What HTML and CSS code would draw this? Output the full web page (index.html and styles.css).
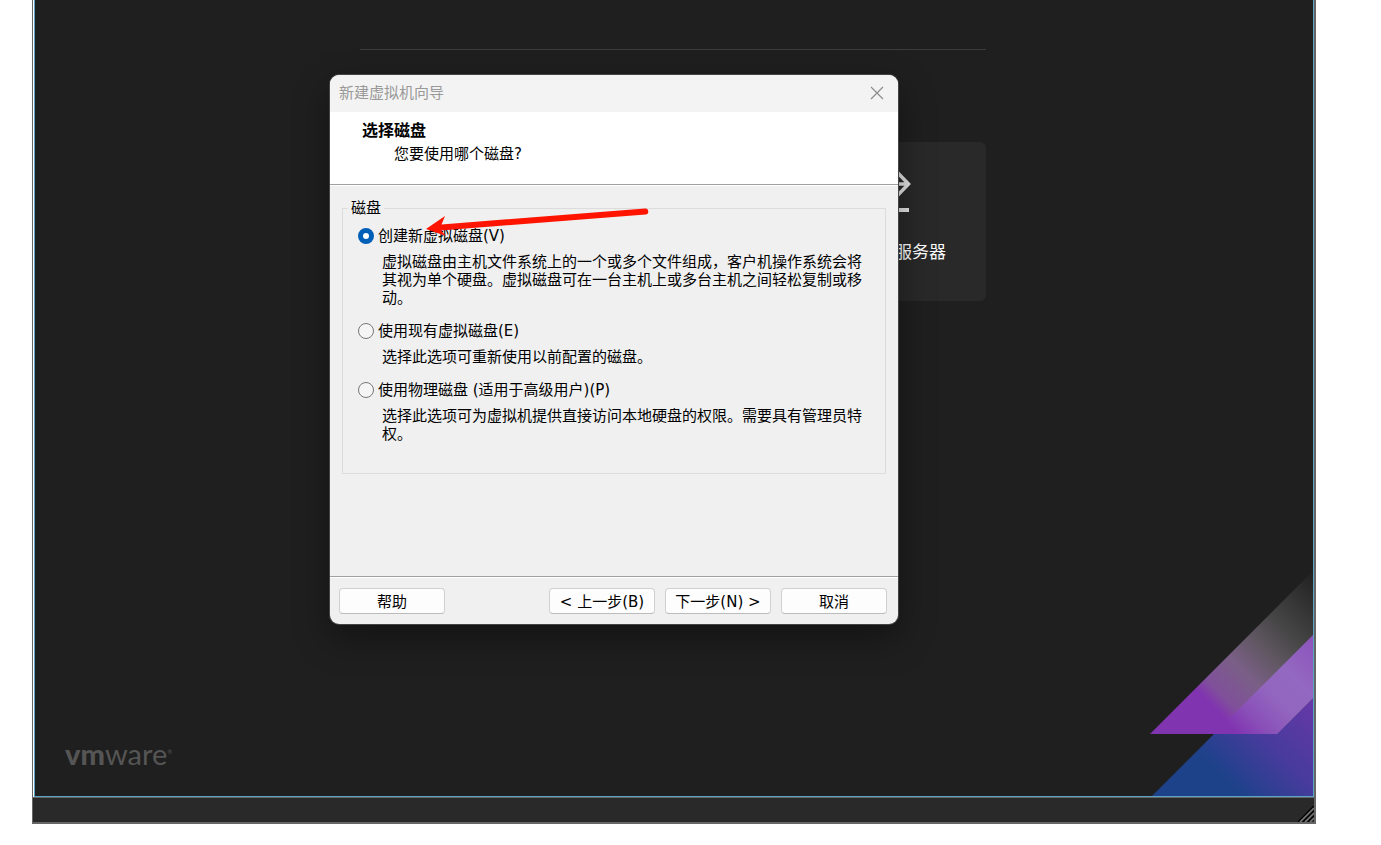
FILE: index.html
```html
<!DOCTYPE html>
<html lang="zh-CN">
<head>
<meta charset="utf-8">
<title>新建虚拟机向导</title>
<link rel="stylesheet" href="styles.css">
</head>
<body>
<div class="app">
  <main class="canvas">
    <section class="home">
      <hr class="rule">
      <div class="cards">
        <a class="card" href="#">
          <svg class="card-icon" width="48" height="48" viewBox="0 0 48 48" fill="none" stroke="#e4e4e4" stroke-width="4" aria-hidden="true">
            <path d="M6 20H45M32.500 6.500L45.500 20L32.500 33.500" stroke-width="3.500"/>
            <path d="M2 46H46"/>
          </svg>
          <span class="card-label">服务器</span>
        </a>
      </div>
    </section>
    <div class="brand"><b>vm</b>ware<sup>®</sup></div>
    <svg class="art" width="163" height="225" viewBox="0 0 163 225" aria-hidden="true">
      <defs>
        <linearGradient id="fade" gradientUnits="userSpaceOnUse" x1="0" y1="163" x2="163" y2="0">
          <stop offset="0" stop-color="#8134b0"/><stop offset=".28" stop-color="#8134b0"/>
          <stop offset=".34" stop-color="#80509b"/><stop offset=".48" stop-color="#7a5f86"/>
          <stop offset=".6" stop-color="#625865"/><stop offset=".73" stop-color="#474747"/>
          <stop offset="1" stop-color="#202020"/>
        </linearGradient>
        <linearGradient id="blue" gradientUnits="userSpaceOnUse" x1="0" y1="133" x2="85" y2="48">
          <stop offset="0" stop-color="#1d428a"/><stop offset=".45" stop-color="#473b9c"/><stop offset="1" stop-color="#6738a8"/>
        </linearGradient>
        <linearGradient id="mix" gradientUnits="userSpaceOnUse" x1="0" y1="163" x2="163" y2="0">
          <stop offset=".27" stop-color="#8134b0"/><stop offset=".37" stop-color="#8a50b9"/>
          <stop offset=".5" stop-color="#9266bf"/><stop offset=".62" stop-color="#9368c1"/><stop offset=".8" stop-color="#8c53bb"/>
        </linearGradient>
      </defs>
      <path d="M2 225L163 64V225Z" fill="url(#blue)"/>
      <path d="M0 163H127L163 127V0Z" fill="url(#fade)"/>
      <path d="M64 163H127L163 127V64Z" fill="url(#mix)"/>
    </svg>
  </main>
  <footer class="statusbar">
    <svg width="16" height="16" viewBox="0 0 16 16" fill="none" aria-hidden="true">
      <path d="M0 16L16 0M5 16L16 5M10 16L16 10" stroke="#000" stroke-width="1.500"/>
      <path d="M2 16L16 2M7 16L16 7M12 16L16 12" stroke="#777" stroke-width="1.500"/>
    </svg>
  </footer>
</div>

<form class="dialog" role="dialog" aria-labelledby="dialog-title">
  <div class="titlebar">
    <span id="dialog-title">新建虚拟机向导</span>
    <button class="close" type="button" aria-label="关闭">
      <svg width="14" height="14" viewBox="0 0 14 14" fill="none" stroke="#8c8c8c" stroke-width="1.200"><path d="M1 1L13 13M13 1L1 13"/></svg>
    </button>
  </div>
  <header class="heading">
    <h1>选择磁盘</h1>
    <p>您要使用哪个磁盘?</p>
  </header>
  <div class="body">
    <fieldset>
      <legend>磁盘</legend>
      <div class="option">
        <label><input type="radio" name="disk" checked>创建新虚拟磁盘(V)</label>
        <p>虚拟磁盘由主机文件系统上的一个或多个文件组成，客户机操作系统会将其视为单个硬盘。虚拟磁盘可在一台主机上或多台主机之间轻松复制或移动。</p>
      </div>
      <div class="option">
        <label><input type="radio" name="disk">使用现有虚拟磁盘(E)</label>
        <p>选择此选项可重新使用以前配置的磁盘。</p>
      </div>
      <div class="option">
        <label><input type="radio" name="disk">使用物理磁盘 (适用于高级用户)(P)</label>
        <p>选择此选项可为虚拟机提供直接访问本地硬盘的权限。需要具有管理员特权。</p>
      </div>
    </fieldset>
  </div>
  <div class="actions">
    <button class="btn help" type="button">帮助</button>
    <button class="btn" type="button">&lt; 上一步(B)</button>
    <button class="btn" type="button">下一步(N) &gt;</button>
    <button class="btn" type="button">取消</button>
  </div>
  <svg class="pointer" width="224" height="30" viewBox="0 0 224 30" aria-hidden="true">
    <path d="M1 21L20 8L16.500 16.500L220 0.500A3 3 0 0 1 220.500 6.500L16 22.500L21 28Z" fill="#ff1400"/>
  </svg>
</form>
</body>
</html>
```
FILE: styles.css
```css
* { box-sizing: border-box; }

body {
  margin: 0;
  background: #fff;
  color: #000;
  font: 15px/18px "DejaVu Sans", "Noto Sans CJK SC", sans-serif;
}

h1, p { margin: 0; }

button { font: inherit; color: inherit; }

/* Application window */
.app {
  display: flex;
  flex-direction: column;
  height: calc(100vh - 21px);
  margin: 0 65px 0 32px;
  border: solid #666;
  border-width: 0 2px 2px 1px;
}

.canvas {
  position: relative;
  flex: 1;
  display: flex;
  flex-direction: column;
  justify-content: space-between;
  margin-left: 1px;
  border: solid #5aa3c4;
  border-width: 0 1px 1px;
  background: #1f1f1f;
  overflow: hidden;
}

.home {
  width: 100%;
  max-width: 628px;
  margin: 0 auto;
  padding: 49px 2px 0 0;
}

.rule {
  height: 1px;
  margin: 0 0 92px;
  border: 0;
  background: #3b3b3b;
}

.cards {
  display: flex;
  justify-content: flex-end;
}

.card {
  display: flex;
  flex-direction: column;
  align-items: center;
  gap: 27px;
  width: 198px;
  height: 159px;
  padding-top: 22px;
  border-radius: 6px;
  background: #292929;
  color: #fff;
  font: 17px/24px "Noto Sans CJK SC", sans-serif;
  text-decoration: none;
}

.card-icon { flex: none; }

.card-label {
  align-self: flex-end;
  padding-right: 40px;
}

.brand {
  padding: 0 0 24px 30px;
  color: #555;
  font: 400 29px/36px Lato, sans-serif;
}

.brand b { font-weight: 900; }

.brand sup {
  font-size: 6px;
  line-height: 8px;
  vertical-align: 11px;
}

.art {
  position: absolute;
  right: 0;
  bottom: 0;
}

.statusbar {
  display: flex;
  justify-content: flex-end;
  align-items: flex-end;
  height: 25px;
  border-top: 1px solid #666;
  background: #292929;
}

/* Wizard dialog */
.dialog {
  position: absolute;
  top: 75px;
  left: 330px;
  display: flex;
  flex-direction: column;
  width: 568px;
  min-height: 549px;
  border-radius: 9px;
  background: #f0f0f0;
  box-shadow: 0 0 0 1px #444, 0 14px 36px rgba(0, 0, 0, .4);
}

.titlebar {
  display: flex;
  justify-content: space-between;
  align-items: center;
  height: 37px;
  padding: 0 12px 2px 9px;
  border-radius: 9px 9px 0 0;
  background: #f3f3f3;
  color: #999;
}

.close {
  display: grid;
  place-items: center;
  width: 18px;
  height: 18px;
  padding: 0;
  border: 0;
  background: none;
}

.heading {
  height: 73px;
  padding: 9px 32px;
  border-bottom: 1px solid #a0a0a0;
  background: #fff;
}

.heading h1 {
  font-size: 16px;
  line-height: 20px;
}

.heading p { padding: 4px 0 0 32px; }

.body {
  flex: 1;
  padding: 13px 12px 0;
  border-top: 1px solid #fff;
}

fieldset {
  display: flex;
  flex-direction: column;
  gap: 15px;
  min-width: 0;
  margin: 0;
  padding: 10px 16px 30px 15px;
  border: 1px solid #dcdcdc;
}

legend {
  margin-left: -10px;
  padding: 0 3px;
}

.option label {
  display: flex;
  align-items: center;
  gap: 4px;
}

.option p { padding: 8px 0 0 24px; }

.option input {
  appearance: none;
  width: 16px;
  height: 16px;
  margin: 0;
  border: 1px solid #777;
  border-radius: 50%;
  background: #f5f5f5;
}

.option input:checked {
  border: 5px solid #0060b8;
  background: #fff;
}

.actions {
  display: flex;
  gap: 10px;
  height: 48px;
  padding: 11px 11px 0 9px;
  border-top: 1px solid #a0a0a0;
  box-shadow: inset 0 1px #fff;
}

.btn {
  width: 106px;
  height: 26px;
  padding: 1px 0 0;
  border: 1px solid #d0d0d0;
  border-bottom-color: #bbb;
  border-radius: 4px;
  background: #fdfdfd;
}

.help { margin-right: auto; }

/* Callout arrow over the first option */
.pointer {
  position: absolute;
  top: 133px;
  left: 95px;
}
```
